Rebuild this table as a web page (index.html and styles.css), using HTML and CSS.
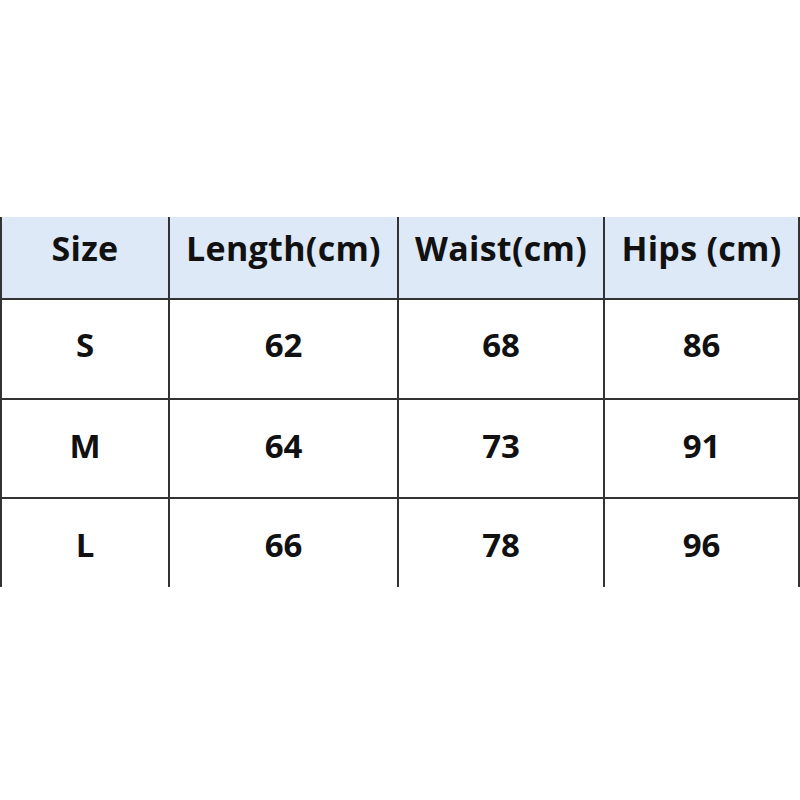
FILE: index.html
```html
<!DOCTYPE html>
<html>
<head>
<meta charset="utf-8">
<link rel="stylesheet" href="styles.css">
</head>
<body>
<div class="page">
  <div class="chart">
    <div class="cell head first">Size</div>
    <div class="cell head">Length(cm)</div>
    <div class="cell head">Waist(cm)</div>
    <div class="cell head">Hips (cm)</div>

    <div class="cell top first">S</div>
    <div class="cell top">62</div>
    <div class="cell top">68</div>
    <div class="cell top">86</div>

    <div class="cell first">M</div>
    <div class="cell">64</div>
    <div class="cell">73</div>
    <div class="cell">91</div>

    <div class="cell first last">L</div>
    <div class="cell last">66</div>
    <div class="cell last">78</div>
    <div class="cell last">96</div>
  </div>
</div>
</body>
</html>
```

FILE: styles.css
```css
html, body {
  margin: 0;
  padding: 0;
  background: #ffffff;
}

.page {
  width: 800px;
  height: 800px;
  padding-top: 217px;
  box-sizing: border-box;
}

.chart {
  display: grid;
  grid-template-columns: 170px 229px 206px 195px;
  grid-template-rows: 83px 100px 99px 88px;
  font-family: "Open Sans", "Liberation Sans", sans-serif;
  font-weight: 700;
  color: #111111;
}

.cell {
  box-sizing: border-box;
  border-right: 2px solid #333333;
  border-bottom: 2px solid #333333;
  display: flex;
  align-items: center;
  justify-content: center;
  font-size: 33px;
  padding-bottom: 6px;
}

.cell.first {
  border-left: 2px solid #333333;
}

.cell.top {
  padding-bottom: 9px;
}

.cell.last {
  border-bottom: none;
  padding-bottom: 0;
  padding-top: 2px;
}

.cell.head {
  background: #dde9f7;
  padding-bottom: 19px;
  font-size: 34px;
  letter-spacing: 0.3px;
}
```
